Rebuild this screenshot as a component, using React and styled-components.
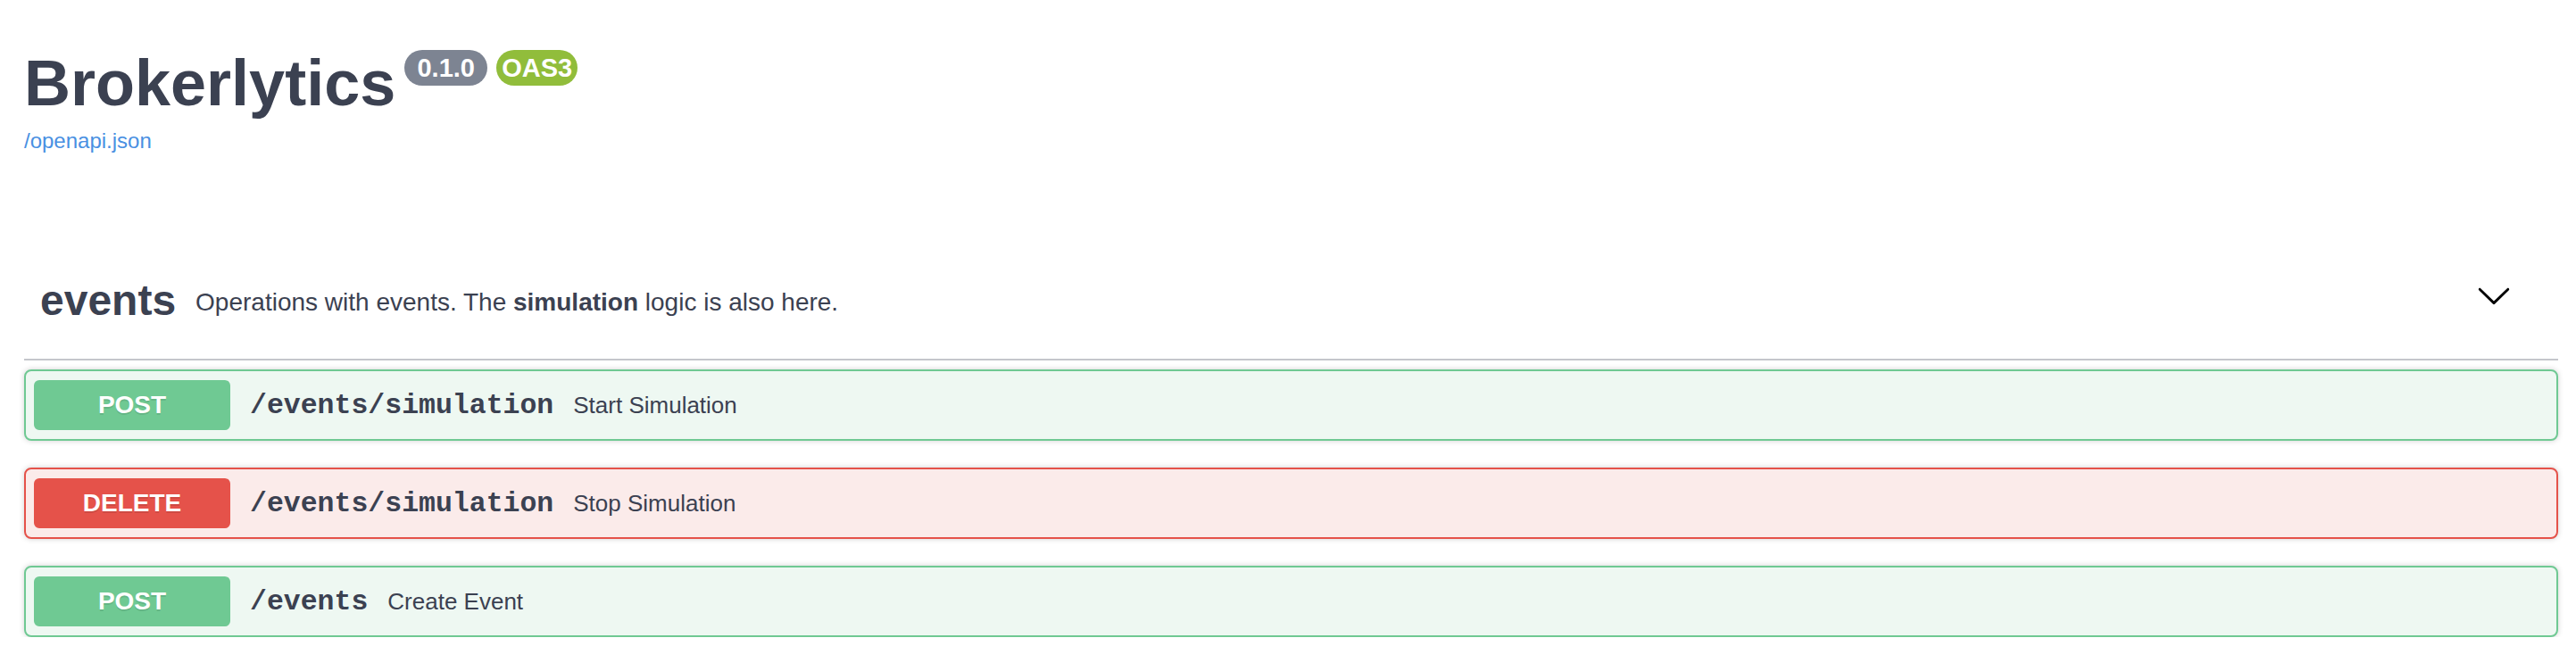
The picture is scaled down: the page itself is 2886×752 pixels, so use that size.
import React from "react";
import styled, { createGlobalStyle } from "styled-components";

const GlobalStyle = createGlobalStyle`
  html, body { margin: 0; padding: 0; background: #ffffff; }
  body {
    font-family: "Liberation Sans", Helvetica, Arial, sans-serif;
    color: #3b4151;
  }
  * { box-sizing: border-box; }
`;

const Page = styled.div`
  padding: 0 20px 0 27px;
`;

const Info = styled.div`
  padding-top: 53px;
`;

const TitleRow = styled.h1`
  display: flex;
  align-items: flex-start;
  margin: 0;
  font-size: 72px;
  font-weight: 700;
  line-height: 80px;
  color: #3b4151;
`;

const Badge = styled.span`
  display: inline-flex;
  align-items: center;
  justify-content: center;
  width: ${(p) => p.$width}px;
  height: 40px;
  margin-top: 3px;
  margin-left: ${(p) => p.$gap}px;
  border-radius: 20px;
  background: ${(p) => (p.$tone === "green" ? "#91bd3b" : "#7d8492")};
  color: #ffffff;
  font-size: 29px;
  font-weight: 700;
  line-height: 40px;
`;

const BaseUrl = styled.a`
  display: block;
  margin-top: 11px;
  font-size: 24px;
  line-height: 28px;
  color: #4990e2;
  text-decoration: none;
`;

const TagSection = styled.section`
  margin-top: 98px;
`;

const TagRow = styled.div`
  display: flex;
  align-items: center;
  height: 134px;
  padding: 0 52px 0 18px;
  border-bottom: 2px solid #c4c6cb;
`;

const TagName = styled.span`
  font-size: 48px;
  font-weight: 700;
  color: #3b4151;
`;

const TagDesc = styled.span`
  flex: 1;
  margin-left: 22px;
  margin-top: 6px;
  font-size: 28px;
  color: #3b4151;

  b { font-weight: 700; }
`;

const ExpandButton = styled.button`
  display: flex;
  background: none;
  border: none;
  padding: 0;
  margin: 0 0 10px 0;
  cursor: pointer;
`;

const OpList = styled.div`
  display: flex;
  flex-direction: column;
  gap: 30px;
  padding-top: 10px;
`;

const palette = {
  post: { border: "#6fc993", bg: "#eef8f2", method: "#6fc993" },
  delete: { border: "#e5524a", bg: "#fbebea", method: "#e5524a" },
};

const OpBlock = styled.div`
  display: flex;
  align-items: center;
  height: 80px;
  padding: 10px 18px 10px 9px;
  border: 2px solid ${(p) => palette[p.$kind].border};
  border-radius: 8px;
  background: ${(p) => palette[p.$kind].bg};
  box-shadow: 0 0 6px rgba(0, 0, 0, 0.19);
`;

const Method = styled.span`
  display: flex;
  align-items: center;
  justify-content: center;
  width: 220px;
  height: 56px;
  flex-shrink: 0;
  border-radius: 6px;
  background: ${(p) => palette[p.$kind].method};
  color: #ffffff;
  font-size: 28px;
  font-weight: 700;
  text-shadow: 0 2px 0 rgba(0, 0, 0, 0.1);
`;

const Path = styled.span`
  padding: 0 22px 0 22px;
  font-family: "Liberation Mono", "Courier New", monospace;
  font-size: 31.5px;
  font-weight: 700;
  color: #3b4151;
`;

const Summary = styled.span`
  font-size: 26px;
  color: #3b4151;
`;

const Chevron = () => (
  <svg width="40" height="40" viewBox="0 0 20 20" aria-hidden="true">
    <path
      fill="#000"
      d="M17.418 6.109c.272-.268.709-.268.979 0s.271.701 0 .969l-7.908 7.83c-.27.268-.707.268-.979 0l-7.908-7.830c-.27-.268-.27-.701 0-.969.271-.268.709-.268.979 0L10 13.25l7.418-7.141z"
    />
  </svg>
);

const ops = [
  { kind: "post", method: "POST", path: "/events/simulation", summary: "Start Simulation" },
  { kind: "delete", method: "DELETE", path: "/events/simulation", summary: "Stop Simulation" },
  { kind: "post", method: "POST", path: "/events", summary: "Create Event" },
];

export default function App() {
  return (
    <>
      <GlobalStyle />
      <Page>
        <Info>
          <TitleRow>
            Brokerlytics
            <Badge $width={93} $gap={10}>0.1.0</Badge>
            <Badge $width={91} $gap={10} $tone="green">OAS3</Badge>
          </TitleRow>
          <BaseUrl href="#">/openapi.json</BaseUrl>
        </Info>
        <TagSection>
          <TagRow>
            <TagName>events</TagName>
            <TagDesc>
              Operations with events. The <b>simulation</b> logic is also here.
            </TagDesc>
            <ExpandButton aria-label="Collapse operation">
              <Chevron />
            </ExpandButton>
          </TagRow>
          <OpList>
            {ops.map((op, i) => (
              <OpBlock key={i} $kind={op.kind}>
                <Method $kind={op.kind}>{op.method}</Method>
                <Path>{op.path}</Path>
                <Summary>{op.summary}</Summary>
              </OpBlock>
            ))}
          </OpList>
        </TagSection>
      </Page>
    </>
  );
}
